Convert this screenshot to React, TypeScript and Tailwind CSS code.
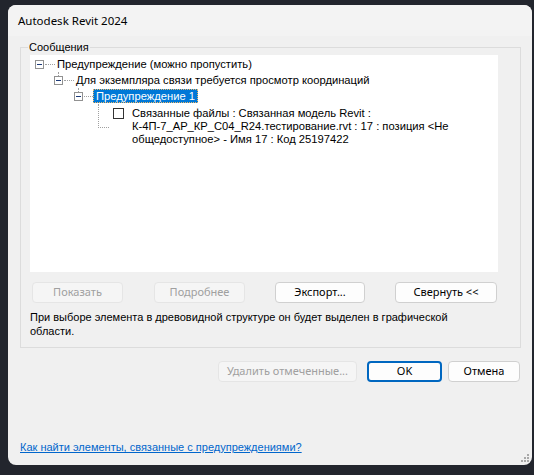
import React from "react";

const ui = { fontFamily: '"Noto Sans", "Open Sans", sans-serif' };
const classic = { fontFamily: '"Liberation Sans", Arial, sans-serif' };

// small [-] box used by the tree nodes
function Expander() {
    return (
        <span className="w-[9px] h-[9px] border border-[#919191] bg-white flex items-center justify-center shrink-0">
            <span className="w-[5px] h-px bg-[#1c3a78]" />
        </span>
    );
}

function Button({ label, disabled, primary, className }: { label: string; disabled?: boolean; primary?: boolean; className?: string }) {
    const base = "h-[21px] rounded-[4px] flex items-center justify-center text-[11px] shrink-0 whitespace-nowrap";
    const look = disabled
        ? "bg-[#f5f5f5] border border-[#e5e5e5] text-[#a0a0a0]"
        : primary
            ? "bg-[#fdfdfd] border-2 border-[#0067c0] text-black"
            : "bg-[#fdfdfd] border border-[#d0d0d0] text-black";
    return (
        <button className={`${base} ${look} ${className ?? ""}`} style={ui} disabled={disabled}>
            {label}
        </button>
    );
}

export default function App() {
    return (
        <div className="w-[534px] h-[475px] bg-[#22252d] pl-[8px] pt-[5px] overflow-hidden">
            <div className="relative w-[524px] h-[460px] rounded-[8px] bg-[#f0f0f0] flex flex-col overflow-hidden">

                {/* Title bar */}
                <div className="h-[31px] bg-[#f3f3f3] flex items-center pl-[10px] text-[11.5px] text-black" style={ui}>
                    Autodesk Revit 2024
                </div>

                {/* Messages group */}
                <fieldset className="ml-[12px] mr-[11px] mt-[5px] border border-[#dcdcdc] pb-[9px]" style={classic}>
                    <legend className="ml-[7px] px-px text-[11px] leading-[13px] text-black">Сообщения</legend>

                    <div className="ml-[9px] mr-[22px] mt-px h-[217px] bg-white pt-px text-[11.2px] text-black">
                        {/* level 0 */}
                        <div className="h-[16px] flex items-center pl-[5px]">
                            <Expander />
                            <span className="w-[10px] border-t border-dotted border-[#a0a0a0] ml-px mr-[2px]" />
                            <span>Предупреждение (можно пропустить)</span>
                        </div>
                        {/* level 1 */}
                        <div className="relative h-[16px] flex items-center pl-[24px]">
                            <span className="absolute left-[28px] top-0 h-[4px] border-l border-dotted border-[#a0a0a0]" />
                            <Expander />
                            <span className="w-[10px] border-t border-dotted border-[#a0a0a0] ml-px mr-[2px]" />
                            <span>Для экземпляра связи требуется просмотр координаций</span>
                        </div>
                        {/* level 2 */}
                        <div className="relative h-[16px] flex items-center pl-[44px]">
                            <span className="absolute left-[48px] top-0 h-[4px] border-l border-dotted border-[#a0a0a0]" />
                            <Expander />
                            <span className="w-[9px] border-t border-dotted border-[#a0a0a0] ml-px" />
                            <span className="h-[14px] px-[3px] flex items-center bg-[#0078d7] text-white outline outline-1 outline-dotted outline-[#f2b866] -outline-offset-1">
                                Предупреждение 1
                            </span>
                        </div>
                        {/* level 3 leaf */}
                        <div className="relative flex pl-[83px] pt-[3px]">
                            <span className="absolute left-[68px] top-0 h-[24px] w-[11px] border-l border-b border-dotted border-[#a0a0a0]" />
                            <span className="w-[11px] h-[11px] border border-[#333] bg-white mt-px shrink-0" />
                            <span className="ml-[8px] leading-[13px]">
                                Связанные файлы : Связанная модель Revit :<br />
                                К-4П-7_АР_КР_С04_R24.тестирование.rvt : 17 : позиция &lt;Не<br />
                                общедоступное&gt; - Имя 17 : Код 25197422
                            </span>
                        </div>
                    </div>

                    {/* tree actions */}
                    <div className="flex ml-[11px] mt-[10px]">
                        <Button label="Показать" disabled className="w-[91px]" />
                        <Button label="Подробнее" disabled className="w-[91px] ml-[31px]" />
                        <Button label="Экспорт..." className="w-[90px] ml-[30px]" />
                        <Button label="Свернуть <<" className="w-[102px] ml-[30px]" />
                    </div>

                    <p className="ml-[9px] mt-[7px] mr-[40px] text-[11px] leading-[14px] text-black">
                        При выборе элемента в древовидной структуре он будет выделен в графической области.
                    </p>
                </fieldset>

                {/* dialog buttons */}
                <div className="flex justify-end mt-[13px] mr-[12px]">
                    <Button label="Удалить отмеченные..." disabled className="w-[139px]" />
                    <Button label="OK" primary className="w-[75px] ml-[10px]" />
                    <Button label="Отмена" className="w-[72px] ml-[6px]" />
                </div>

                <div className="flex-1" />

                <a href="#" className="ml-[12px] mb-[11px] text-[11px] leading-[14px] text-[#0066cc] underline w-fit" style={classic}>
                    Как найти элементы, связанные с предупреждениями?
                </a>

                {/* size grip */}
                <svg className="absolute right-[2px] bottom-[2px]" width="10" height="10" viewBox="0 0 10 10">
                    <g fill="#a8a8a8">
                        <rect x="7" y="1" width="2" height="2" />
                        <rect x="4" y="4" width="2" height="2" />
                        <rect x="7" y="4" width="2" height="2" />
                        <rect x="1" y="7" width="2" height="2" />
                        <rect x="4" y="7" width="2" height="2" />
                        <rect x="7" y="7" width="2" height="2" />
                    </g>
                </svg>
            </div>
        </div>
    );
}
